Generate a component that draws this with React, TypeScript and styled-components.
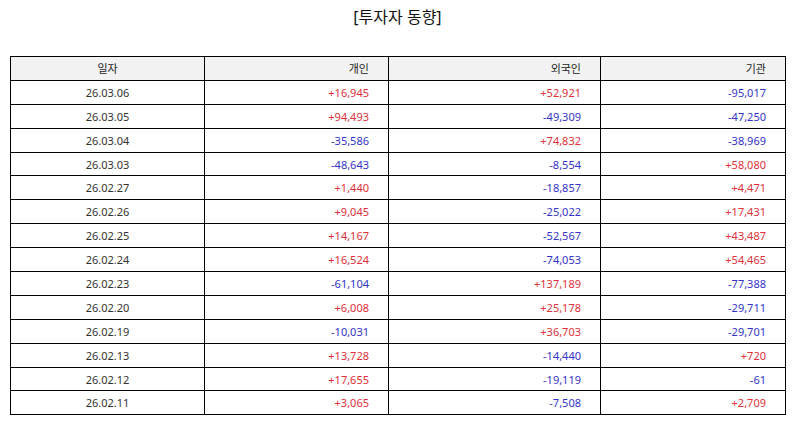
import styled, { createGlobalStyle } from "styled-components"

const ROWS: [string, string, string, string][] = [
  ["26.03.06", "+16,945", "+52,921", "-95,017"],
  ["26.03.05", "+94,493", "-49,309", "-47,250"],
  ["26.03.04", "-35,586", "+74,832", "-38,969"],
  ["26.03.03", "-48,643", "-8,554", "+58,080"],
  ["26.02.27", "+1,440", "-18,857", "+4,471"],
  ["26.02.26", "+9,045", "-25,022", "+17,431"],
  ["26.02.25", "+14,167", "-52,567", "+43,487"],
  ["26.02.24", "+16,524", "-74,053", "+54,465"],
  ["26.02.23", "-61,104", "+137,189", "-77,388"],
  ["26.02.20", "+6,008", "+25,178", "-29,711"],
  ["26.02.19", "-10,031", "+36,703", "-29,701"],
  ["26.02.13", "+13,728", "-14,440", "+720"],
  ["26.02.12", "+17,655", "-19,119", "-61"],
  ["26.02.11", "+3,065", "-7,508", "+2,709"],
]

export default function App() {
  return (
    <Page>
      <GlobalStyle />
      <Title>[투자자 동향]</Title>
      <Table>
        <colgroup>
          <col style={{ width: "194px" }} />
          <col style={{ width: "184px" }} />
          <col style={{ width: "212px" }} />
          <col style={{ width: "185px" }} />
        </colgroup>
        <thead>
          <tr>
            <Head>일자</Head>
            <Head $right>개인</Head>
            <Head $right>외국인</Head>
            <Head $right>기관</Head>
          </tr>
        </thead>
        <tbody>
          {ROWS.map(([date, ...vals]) => (
            <tr key={date}>
              <DateCell>{date}</DateCell>
              {vals.map((v, i) => (
                <NumCell key={i} $up={v.startsWith("+")}>
                  {v}
                </NumCell>
              ))}
            </tr>
          ))}
        </tbody>
      </Table>
    </Page>
  )
}

const GlobalStyle = createGlobalStyle`
  body {
    margin: 0;
    background: #fff;
    font-family: "Noto Sans", "Noto Sans CJK KR", sans-serif;
    color: #222;
  }
`

const Page = styled.div`
  width: 795px;
  height: 425px;
  padding: 0 10px;
  box-sizing: border-box;
`

const Title = styled.h2`
  margin: 0;
  padding-top: 5px;
  height: 56px;
  box-sizing: border-box;
  text-align: center;
  font-size: 16px;
  font-weight: 400;
  line-height: 24px;
  color: #111;
`

const Table = styled.table`
  width: 775px;
  table-layout: fixed;
  border-collapse: collapse;
  border: 1.5px solid #000;
  font-size: 11px;

  td,
  th {
    border: 1.5px solid #000;
    height: 23.9px;
    padding: 0;
    box-sizing: border-box;
  }
`

const Head = styled.th<{ $right?: boolean }>`
  background: #f2f2f2;
  font-weight: 400;
  color: #222;
  text-align: ${({ $right }) => ($right ? "right" : "center")};
  padding-right: ${({ $right }) => ($right ? "19px" : "0")} !important;
`

const DateCell = styled.td`
  text-align: center;
  color: #333;
`

const NumCell = styled.td<{ $up: boolean }>`
  text-align: right;
  padding-right: 19px !important;
  color: ${({ $up }) => ($up ? "#e0303a" : "#3434c8")};
`
